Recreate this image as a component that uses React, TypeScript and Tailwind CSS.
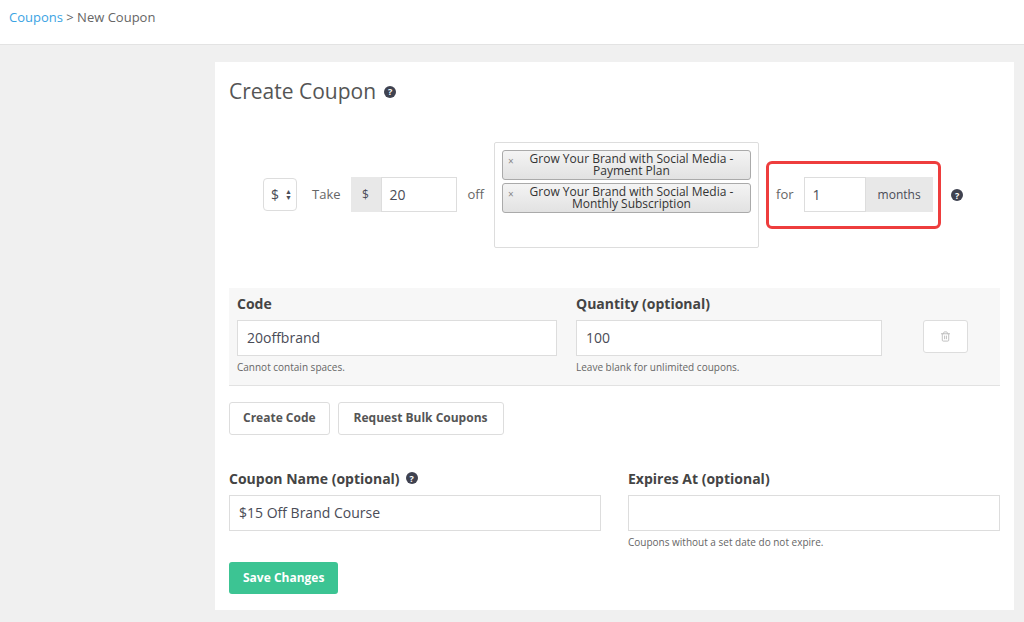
import { Trash2 } from 'lucide-react';

function Help() {
    return (
        <span className="inline-flex items-center justify-center w-[12px] h-[12px] rounded-full bg-[#3f4250] text-white text-[9px] font-bold leading-none">?</span>
    );
}

function Tag({ lines }: { lines: string[] }) {
    return (
        <div className="flex items-start border border-[#aaa] rounded-[3px] bg-gradient-to-b from-[#f4f4f4] to-[#e2e2e2] px-[5px] py-[2px] text-[12px] leading-[12px] text-[#333]">
            <span className="text-[#888] text-[10px] mt-[2px] mr-[4px]">×</span>
            <div className="flex-1 text-center">{lines.map((l) => <div key={l}>{l}</div>)}</div>
        </div>
    );
}

export default function App() {
    return (
        <div className="min-h-[622px] bg-[#f0f0f0] text-[#4a4c57]" style={{ fontFamily: '"Open Sans", sans-serif' }}>
            <div className="h-[45px] bg-white border-b border-[#e3e3e3] px-[9px] pt-[8px] text-[13px]">
                <span className="text-[#3aa3e3]">Coupons</span>
                <span className="text-[#666]"> &gt; New Coupon</span>
            </div>
            <div className="ml-[215px] mr-[10px] mt-[17px] h-[548px] bg-white px-[14px] pt-[14px]">
                <div className="flex items-center gap-[8px] text-[21px] text-[#555]">
                    Create Coupon <Help />
                </div>
                <div className="flex items-center mt-[34px] ml-[34px] text-[13px]">
                    <div className="flex items-center gap-[6px] h-[33px] w-[34px] border border-[#ddd] rounded-[4px] px-[7px] text-[14px]">
                        $<span className="text-[7px] leading-[6px] flex flex-col"><span>▲</span><span>▼</span></span>
                    </div>
                    <span className="ml-[15px] text-[#666]">Take</span>
                    <div className="ml-[10px] flex h-[35px]">
                        <div className="w-[30px] bg-[#e8e8e8] flex items-center justify-center text-[12px]">$</div>
                        <div className="w-[76px] border border-[#ddd] flex items-center pl-[8px] text-[14px]">20</div>
                    </div>
                    <span className="ml-[11px] text-[#666]">off</span>
                    <div className="ml-[10px] w-[265px] h-[106px] border border-[#ddd] rounded-[2px] p-[7px] flex flex-col gap-[3px]">
                        <Tag lines={['Grow Your Brand with Social Media -', 'Payment Plan']} />
                        <Tag lines={['Grow Your Brand with Social Media -', 'Monthly Subscription']} />
                    </div>
                    <div className="ml-[7px] flex items-center h-[68px] w-[175px] border-[3px] border-[#ee3d3d] rounded-[6px] pl-[7px]">
                        <span className="text-[#666]">for</span>
                        <div className="ml-[10px] w-[62px] h-[35px] border border-[#ddd] flex items-center pl-[8px] text-[14px]">1</div>
                        <div className="w-[67px] h-[35px] bg-[#e8e8e8] flex items-center justify-center text-[12px]">months</div>
                    </div>
                    <span className="ml-[10px]"><Help /></span>
                </div>
                <div className="mt-[40px] bg-[#f7f7f7] border-b border-[#e2e2e2] h-[98px] px-[8px] pt-[5px] flex gap-[19px] text-[14px]">
                    <div className="w-[320px]">
                        <div className="font-bold text-[#444]">Code</div>
                        <div className="mt-[6px] h-[36px] bg-white border border-[#ddd] flex items-center px-[9px]">20offbrand</div>
                        <div className="mt-[4px] text-[10px] text-[#666]">Cannot contain spaces.</div>
                    </div>
                    <div className="w-[306px]">
                        <div className="font-bold text-[#444]">Quantity (optional)</div>
                        <div className="mt-[6px] h-[36px] bg-white border border-[#ddd] flex items-center px-[9px]">100</div>
                        <div className="mt-[4px] text-[10px] text-[#666]">Leave blank for unlimited coupons.</div>
                    </div>
                    <div className="ml-[22px] mt-[27px] w-[45px] h-[33px] bg-white border border-[#ddd] rounded-[3px] flex items-center justify-center">
                        <Trash2 className="w-[11px] h-[11px] text-[#bbb]" />
                    </div>
                </div>
                <div className="mt-[16px] flex gap-[8px] text-[12px] font-bold text-[#555]">
                    <div className="h-[33px] px-[13px] border border-[#ddd] rounded-[3px] flex items-center">Create Code</div>
                    <div className="h-[33px] px-[15px] border border-[#ddd] rounded-[3px] flex items-center">Request Bulk Coupons</div>
                </div>
                <div className="mt-[33px] flex gap-[27px] text-[14px]">
                    <div className="w-[372px]">
                        <div className="font-bold text-[#444] flex items-center gap-[6px]">Coupon Name (optional) <Help /></div>
                        <div className="mt-[6px] h-[36px] border border-[#ddd] flex items-center px-[9px]">$15 Off Brand Course</div>
                    </div>
                    <div className="w-[372px]">
                        <div className="font-bold text-[#444]">Expires At (optional)</div>
                        <div className="mt-[6px] h-[36px] border border-[#ddd]"></div>
                        <div className="mt-[4px] text-[10px] text-[#666]">Coupons without a set date do not expire.</div>
                    </div>
                </div>
                <div className="mt-[12px] inline-flex h-[32px] px-[14px] items-center rounded-[3px] bg-[#3cc493] text-white text-[12px] font-bold">Save Changes</div>
            </div>
        </div>
    );
}
